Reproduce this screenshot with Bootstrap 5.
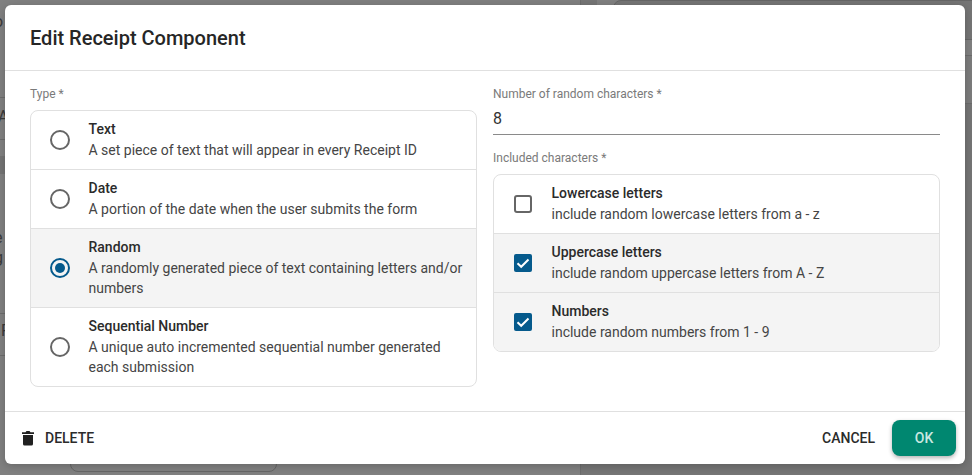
<!DOCTYPE html>
<html lang="en">
<head>
<meta charset="utf-8">
<title>Edit Receipt Component</title>
<link href="https://cdn.jsdelivr.net/npm/bootstrap@5.3.0/dist/css/bootstrap.min.css" rel="stylesheet">
<style>
html,body{height:475px;overflow:hidden;background:#808080;font-family:Roboto,"Liberation Sans",sans-serif;color:#212121}
.page-bg{position:absolute;inset:0;overflow:hidden;color:#3a3a3a;font-size:16px;line-height:20px}
.page-bg>div{position:absolute}
.bg-right{left:580px;top:0;right:0;bottom:0;background:#757575;border-left:1px solid #6c6c6c}
.bg-top1{left:597px;top:0;right:0;height:56px;background:#808080;border-bottom:1px solid #6c6c6c}
.bg-top2{left:597px;top:56px;right:0;height:48px;background:#7c7c7c;border-bottom:1px solid #6c6c6c}
.bg-box1{left:613px;top:0;width:400px;height:40px;background:#757575;border:1px solid #666;border-radius:8px}
.bg-box2{left:70px;top:430px;width:207px;height:42px;border:1px solid #666;border-radius:8px}
.bg-ln{left:0;width:5px;height:1px;background:#6c6c6c}
.bg-l1{top:97px}.bg-l2{top:139px}.bg-l3{top:313px}.bg-l4{top:355px}
.bg-fill{left:0;top:156px;width:5px;height:18px;background:#747474}
.bg-a{left:-6px;top:12px}.bg-b{left:-2px;top:107px}.bg-c{left:-6px;top:228px}.bg-d{left:-6px;top:248px}.bg-e{left:1px;top:321px}
.dlg-wrap{position:relative;padding:5px 7px 11px 5px;height:475px}
.dlg{width:960px;height:459px;background:#fff;border-radius:6px;box-shadow:0 2px 8px rgba(0,0,0,.2)}
.dlg-head{height:66px;border-bottom:1px solid #e0e0e0;padding:0 25px;font-size:20px;font-weight:500;line-height:66px;color:#262626}
.dlg-body{padding:16px 25px 0;gap:16px}
.dlg-col{width:447px}
.fld-lbl{font-size:12px;line-height:14px;color:#7a7a7a;margin-bottom:9px;height:14px}
.opt-group{border:1px solid #e0e0e0;border-radius:8px;overflow:hidden}
.opt{padding:8px 12px 9px 0;border-bottom:1px solid #e0e0e0}
.opt:last-child{border-bottom:0}
.opt.sel{background:#f4f4f4}
.opt-mark{width:57.5px;flex:0 0 57.5px;padding-left:.5px}
.opt-t{font-size:14px;font-weight:500;line-height:21px;color:#2b2b2b}
.opt-d{font-size:14px;line-height:20px;color:#454545}
.num-in{height:34px;border-bottom:1px solid #8a8a8a;font-size:16px;line-height:20px;padding-top:8px;margin-bottom:16px;color:#333}
.dlg-foot{height:53px;border-top:1px solid #e0e0e0;padding:0 9px 0 16px}
.act{font-size:14px;font-weight:500;color:#2b2b2b}
.del-gap{gap:10px}
.foot-gap{gap:17px}
.ok-btn{width:64px;height:36px;background:#008770;color:#c9e8e1;border-radius:8px;font-size:14px;font-weight:500;box-shadow:0 2px 4px rgba(0,0,0,.3)}
</style>
</head>
<body>
<div class="page-bg" aria-hidden="true">
  <div class="bg-right"></div>
  <div class="bg-top1"></div>
  <div class="bg-top2"></div>
  <div class="bg-box1"></div>
  <div class="bg-box2"></div>
  <div class="bg-ln bg-l1"></div><div class="bg-ln bg-l2"></div><div class="bg-ln bg-l3"></div><div class="bg-ln bg-l4"></div>
  <div class="bg-fill"></div>
  <div class="bg-a">o</div><div class="bg-b">A</div><div class="bg-c">e</div><div class="bg-d">g</div><div class="bg-e">F</div>
</div>
<div class="dlg-wrap">
<div class="dlg d-flex flex-column">
  <div class="dlg-head">Edit Receipt Component</div>
  <div class="dlg-body d-flex">
    <div class="dlg-col">
      <div class="fld-lbl">Type *</div>
      <div class="opt-group">
        <div class="opt d-flex align-items-center">
          <div class="opt-mark d-flex justify-content-center"><svg width="22" height="22" viewBox="0 0 22 22"><circle cx="11" cy="11" r="9" fill="none" stroke="#666" stroke-width="2"/></svg></div>
          <div><div class="opt-t">Text</div><div class="opt-d">A set piece of text that will appear in every Receipt ID</div></div>
        </div>
        <div class="opt d-flex align-items-center">
          <div class="opt-mark d-flex justify-content-center"><svg width="22" height="22" viewBox="0 0 22 22"><circle cx="11" cy="11" r="9" fill="none" stroke="#666" stroke-width="2"/></svg></div>
          <div><div class="opt-t">Date</div><div class="opt-d">A portion of the date when the user submits the form</div></div>
        </div>
        <div class="opt sel d-flex align-items-center">
          <div class="opt-mark d-flex justify-content-center"><svg width="22" height="22" viewBox="0 0 22 22"><circle cx="11" cy="11" r="9" fill="none" stroke="#055a8c" stroke-width="2"/><circle cx="11" cy="11" r="5" fill="#055a8c"/></svg></div>
          <div><div class="opt-t">Random</div><div class="opt-d">A randomly generated piece of text containing letters and/or numbers</div></div>
        </div>
        <div class="opt d-flex align-items-center">
          <div class="opt-mark d-flex justify-content-center"><svg width="22" height="22" viewBox="0 0 22 22"><circle cx="11" cy="11" r="9" fill="none" stroke="#666" stroke-width="2"/></svg></div>
          <div><div class="opt-t">Sequential Number</div><div class="opt-d">A unique auto incremented sequential number generated each submission</div></div>
        </div>
      </div>
    </div>
    <div class="dlg-col">
      <div class="fld-lbl mb-0">Number of random characters *</div>
      <div class="num-in">8</div>
      <div class="fld-lbl">Included characters *</div>
      <div class="opt-group">
        <div class="opt d-flex align-items-center">
          <div class="opt-mark d-flex justify-content-center"><svg width="18" height="18" viewBox="0 0 18 18"><rect x="1" y="1" width="16" height="16" rx="2" fill="none" stroke="#666" stroke-width="2"/></svg></div>
          <div><div class="opt-t">Lowercase letters</div><div class="opt-d">include random lowercase letters from a - z</div></div>
        </div>
        <div class="opt sel d-flex align-items-center">
          <div class="opt-mark d-flex justify-content-center"><svg width="18" height="18" viewBox="0 0 18 18"><rect width="18" height="18" rx="2" fill="#055a8c"/><path d="M3.5 9.2l3.7 3.6 7.3-7.3" fill="none" stroke="#fff" stroke-width="2"/></svg></div>
          <div><div class="opt-t">Uppercase letters</div><div class="opt-d">include random uppercase letters from A - Z</div></div>
        </div>
        <div class="opt sel d-flex align-items-center">
          <div class="opt-mark d-flex justify-content-center"><svg width="18" height="18" viewBox="0 0 18 18"><rect width="18" height="18" rx="2" fill="#055a8c"/><path d="M3.5 9.2l3.7 3.6 7.3-7.3" fill="none" stroke="#fff" stroke-width="2"/></svg></div>
          <div><div class="opt-t">Numbers</div><div class="opt-d">include random numbers from 1 - 9</div></div>
        </div>
      </div>
    </div>
  </div>
  <div class="dlg-foot d-flex align-items-center mt-auto">
    <div class="act d-flex align-items-center del-gap">
      <svg width="14" height="16" viewBox="0 0 14 16"><path d="M1 2.2h3.500L5.500 1h3l1 1.200H13V3.900H1zM2 4.900h10V14a1.600 1.600 0 0 1-1.600 1.600H3.600A1.600 1.600 0 0 1 2 14z" fill="#212121"/></svg>
      <span>DELETE</span>
    </div>
    <div class="d-flex align-items-center ms-auto foot-gap">
      <span class="act">CANCEL</span>
      <div class="ok-btn d-flex align-items-center justify-content-center">OK</div>
    </div>
  </div>
</div>
</div>
<script src="https://cdn.jsdelivr.net/npm/bootstrap@5.3.0/dist/js/bootstrap.bundle.min.js"></script>
</body>
</html>
